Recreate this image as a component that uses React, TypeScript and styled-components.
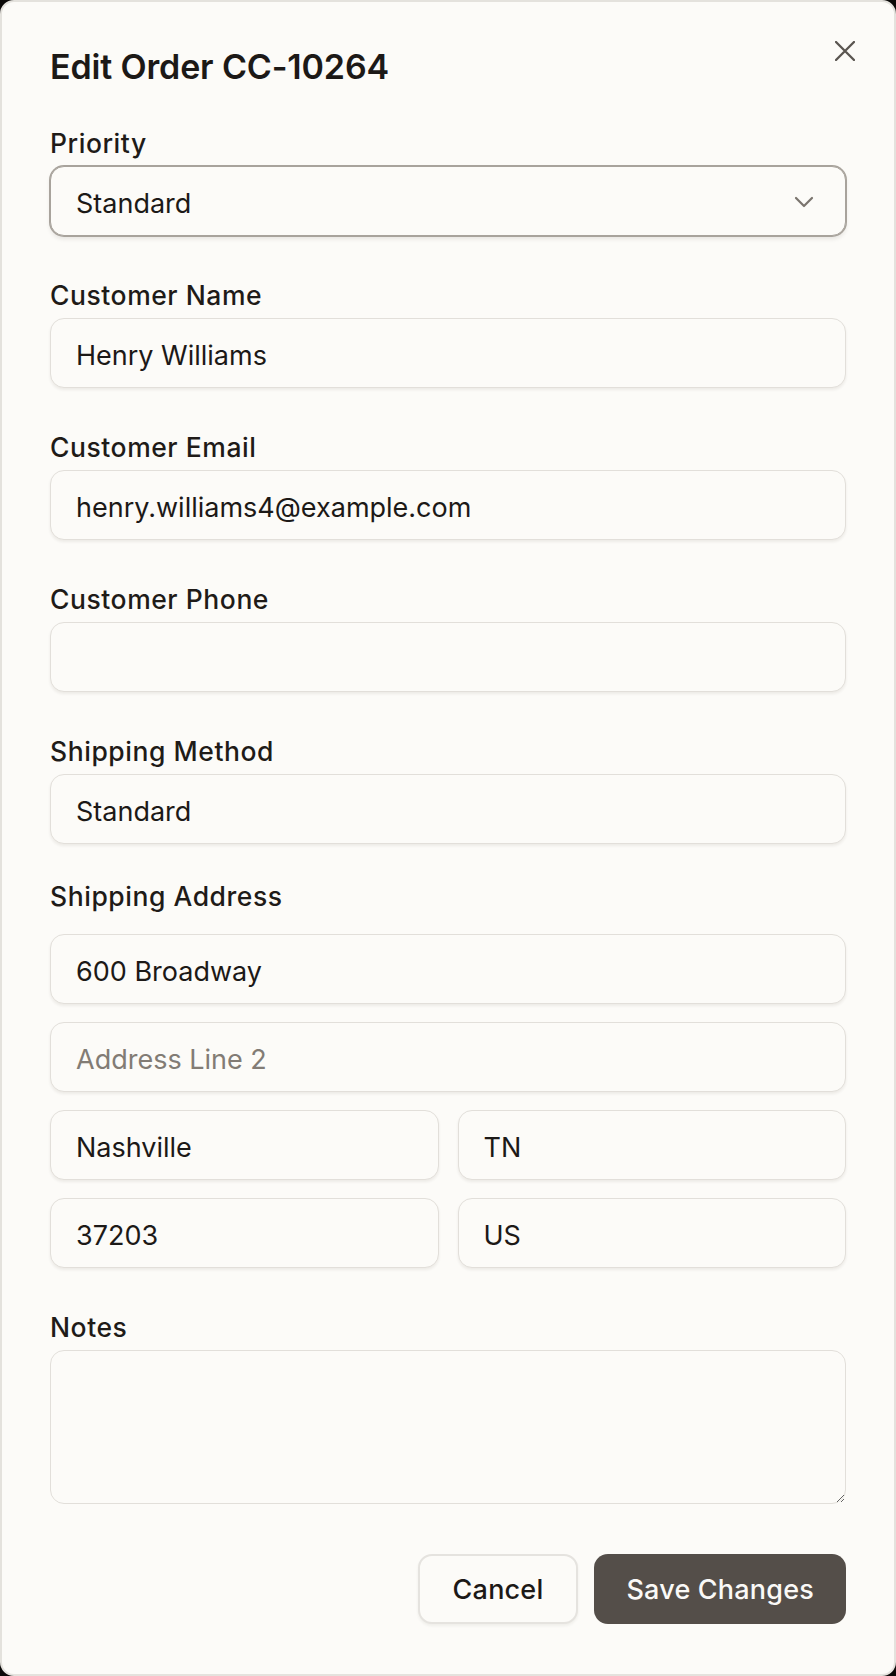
import React from "react";
import styled, { createGlobalStyle } from "styled-components";

const GlobalStyle = createGlobalStyle`
  *, *::before, *::after { box-sizing: border-box; }
  html, body { margin: 0; padding: 0; }
  body {
    background: #0c0a09;
    font-family: Inter, "Noto Sans", "Liberation Sans", sans-serif;
    color: #1c1917;
    -webkit-font-smoothing: antialiased;
  }
`;

const Dialog = styled.div`
  position: relative;
  width: 896px;
  min-height: 1676px;
  background: #fcfbf8;
  border: 2px solid #e4e2dd;
  border-radius: 14px;
  padding: 45px 48px 47px;
  display: flex;
  flex-direction: column;
`;

const Title = styled.h2`
  margin: 0;
  font-size: 34px;
  line-height: 40px;
  font-weight: 600;
  letter-spacing: -0.15px;
  color: #1c1917;
`;

const CloseButton = styled.button`
  position: absolute;
  top: 39px;
  right: 39px;
  width: 20px;
  height: 20px;
  padding: 0;
  border: none;
  background: transparent;
  display: flex;
  align-items: center;
  justify-content: center;
  cursor: pointer;
`;

const Form = styled.form`
  margin-top: 39px;
  display: flex;
  flex-direction: column;
`;

const Field = styled.div<{ $above?: number }>`
  display: flex;
  flex-direction: column;
  margin-top: ${(p) => (p.$above ?? 42)}px;
  &:first-child { margin-top: 0; }
`;

const Label = styled.label<{ $gap?: number }>`
  display: block;
  font-size: 26.5px;
  line-height: 35px;
  font-weight: 500;
  letter-spacing: 0.55px;
  color: #1f1b18;
  margin-bottom: ${(p) => (p.$gap ?? 5)}px;
`;

const controlBase = `
  width: 100%;
  height: 70px;
  padding: 5px 25px 0;
  font-family: Inter, "Noto Sans", "Liberation Sans", sans-serif;
  font-size: 27px;
  font-weight: 400;
  color: #1c1917;
  background: #fcfbf8;
  border: 1px solid #e2dfda;
  border-radius: 14px;
  box-shadow: 0 2px 3px rgba(40, 30, 20, 0.07);
  outline: none;
`;

const Input = styled.input`
  ${controlBase}
  &::placeholder { color: #827c75; }
`;

const SelectWrap = styled.div`
  position: relative;
`;

const Select = styled.select`
  ${controlBase}
  appearance: none;
  -webkit-appearance: none;
  border-color: #a8a39c;
  box-shadow: 0 0 0 1px #a8a39c, 0 3px 4px rgba(40, 30, 20, 0.1);
`;

const Chevron = styled.svg`
  position: absolute;
  right: 32px;
  top: 30px;
  pointer-events: none;
`;

const Stack = styled.div`
  display: flex;
  flex-direction: column;
  gap: 18px;
`;

const Pair = styled.div`
  display: grid;
  grid-template-columns: 1fr 1fr;
  gap: 19px;
`;

const TextArea = styled.textarea`
  ${controlBase}
  height: 154px;
  padding: 16px 25px;
  resize: vertical;
  box-shadow: none;
  border-width: 1.5px;
`;

const Footer = styled.div`
  margin-top: 50px;
  display: flex;
  justify-content: flex-end;
  gap: 16px;
`;

const Button = styled.button<{ $primary?: boolean }>`
  height: 70px;
  padding: 0 ${(p) => (p.$primary ? 32 : 33)}px;
  border-radius: 14px;
  font-family: Inter, "Noto Sans", "Liberation Sans", sans-serif;
  font-size: 27px;
  font-weight: 500;
  letter-spacing: 0.2px;
  cursor: pointer;
  border: ${(p) => (p.$primary ? "none" : "2px solid #e5e3df")};
  background: ${(p) => (p.$primary ? "#544e49" : "#fcfbf8")};
  color: ${(p) => (p.$primary ? "#faf9f7" : "#1c1917")};
  box-shadow: ${(p) => (p.$primary ? "none" : "0 2px 3px rgba(40,30,20,0.06)")};
`;

export default function App() {
  return (
    <>
      <GlobalStyle />
      <Dialog role="dialog">
        <Title>Edit Order CC-10264</Title>
        <CloseButton type="button" aria-label="Close">
          <svg width="20" height="20" viewBox="0 0 20 20">
            <path d="M1 1 L19 19 M19 1 L1 19" stroke="#5a5550" strokeWidth="2.3" strokeLinecap="round" fill="none" />
          </svg>
        </CloseButton>
        <Form onSubmit={(e) => e.preventDefault()}>
          <Field>
            <Label>Priority</Label>
            <SelectWrap>
              <Select defaultValue="standard">
                <option value="standard">Standard</option>
                <option value="express">Express</option>
                <option value="urgent">Urgent</option>
              </Select>
              <Chevron width="20" height="12" viewBox="0 0 20 12">
                <path d="M2 2 L10 10 L18 2" stroke="#7a746d" strokeWidth="2.2" strokeLinecap="round" strokeLinejoin="round" fill="none" />
              </Chevron>
            </SelectWrap>
          </Field>
          <Field>
            <Label>Customer Name</Label>
            <Input defaultValue="Henry Williams" />
          </Field>
          <Field>
            <Label>Customer Email</Label>
            <Input defaultValue="henry.williams4@example.com" />
          </Field>
          <Field>
            <Label>Customer Phone</Label>
            <Input defaultValue="" />
          </Field>
          <Field>
            <Label>Shipping Method</Label>
            <Input defaultValue="Standard" />
          </Field>
          <Field $above={35}>
            <Label $gap={20}>Shipping Address</Label>
            <Stack>
              <Input defaultValue="600 Broadway" />
              <Input placeholder="Address Line 2" />
              <Pair>
                <Input defaultValue="Nashville" />
                <Input defaultValue="TN" />
              </Pair>
              <Pair>
                <Input defaultValue="37203" />
                <Input defaultValue="US" />
              </Pair>
            </Stack>
          </Field>
          <Field>
            <Label>Notes</Label>
            <TextArea />
          </Field>
          <Footer>
            <Button type="button">Cancel</Button>
            <Button type="submit" $primary>Save Changes</Button>
          </Footer>
        </Form>
      </Dialog>
    </>
  );
}
